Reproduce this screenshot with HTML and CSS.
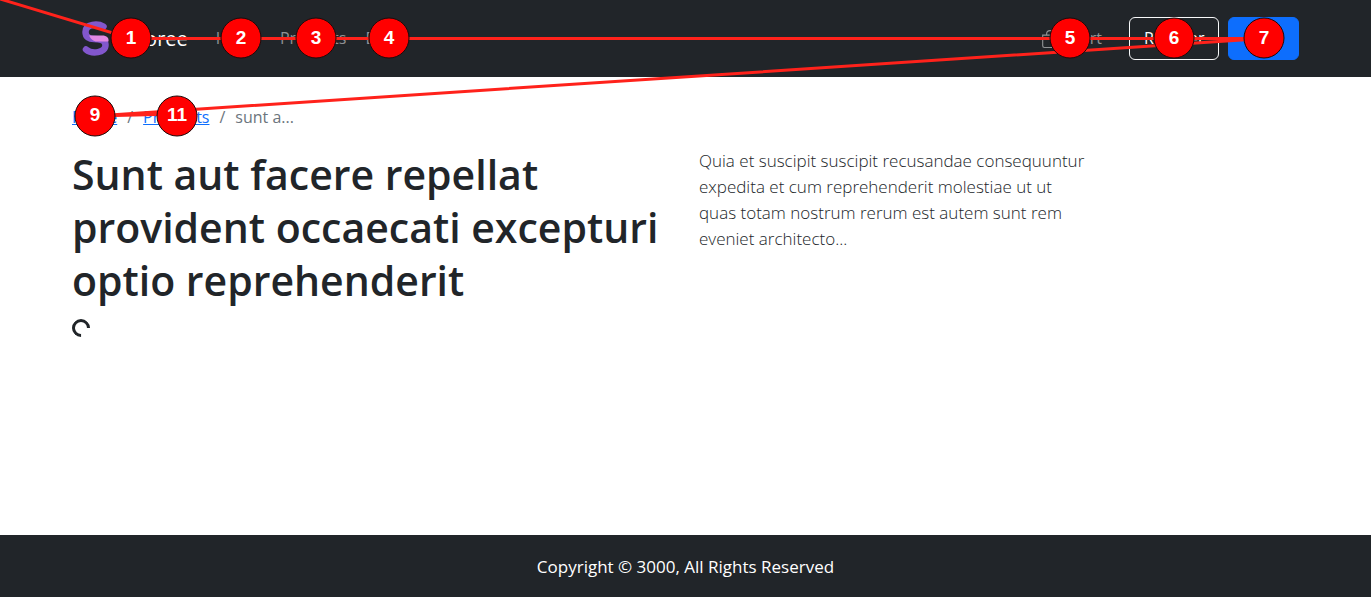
FILE: index.html
```html
<!DOCTYPE html>
<html lang="en">
<head>
<meta charset="utf-8">
<title>Storee</title>
<meta name="viewport" content="width=device-width, initial-scale=1">
<link rel="stylesheet" href="styles.css">
</head>
<body>
<header class="navbar">
  <a class="brand" href="#">
    <svg class="brand-logo" width="30" height="36" viewBox="0 0 30 36" fill="none" stroke-linecap="round" aria-hidden="true">
      <path d="M22.500 5.500C17 2.500 4.500 2.500 4.500 11C4.500 16 8 18 13 18C20 18 24.500 19 24.500 24C24.500 32 11 33.500 5 28.500" stroke="#8257cd" stroke-width="6.500"/>
      <path d="M8 14.500H21C26 14.500 28 17 27.500 20.500H16C12 20.500 10 18 8 14.500Z" fill="#e388e2"/>
    </svg>
    <span>Storee</span>
  </a>
  <nav class="menu" aria-label="Main">
    <a href="#">Home</a>
    <a href="#">Products</a>
    <a href="#">Blogs</a>
  </nav>
  <div class="actions">
    <a class="cart" href="#">
      <svg width="18" height="18" viewBox="0 0 16 16" fill="currentColor" aria-hidden="true"><path d="M8 1a2.500 2.500 0 0 1 2.500 2.500V4h-5v-.5A2.500 2.500 0 0 1 8 1zm3.500 3v-.5a3.500 3.500 0 1 0-7 0V4H1v10a2 2 0 0 0 2 2h10a2 2 0 0 0 2-2V4h-3.500zM2 5h12v9a1 1 0 0 1-1 1H3a1 1 0 0 1-1-1V5z"/></svg>
      Cart
    </a>
    <button class="btn btn-outline" type="button">Register</button>
    <button class="btn btn-primary" type="button">Login</button>
  </div>
</header>

<main class="content">
  <nav aria-label="Breadcrumb">
    <ol class="breadcrumb">
      <li><a href="#">Home</a></li>
      <li><a href="#">Products</a></li>
      <li aria-current="page">sunt a...</li>
    </ol>
  </nav>
  <div class="columns">
    <section>
      <h1 class="title">Sunt aut facere repellat provident occaecati excepturi optio reprehenderit</h1>
      <div class="spinner" role="status" aria-label="Loading"></div>
    </section>
    <p class="lead">Quia et suscipit suscipit recusandae consequuntur expedita et cum reprehenderit molestiae ut ut quas totam nostrum rerum est autem sunt rem eveniet architecto...</p>
  </div>
</main>

<footer class="footer">Copyright © 3000, All Rights Reserved</footer>

<svg class="tab-path" width="1371" height="150" viewBox="0 0 1371 150" aria-hidden="true">
  <path class="tab-line" d="M0 -1L131 38.500H1264L95 116L177 114"/>
  <g class="tab-stop">
    <circle cx="131" cy="38" r="20"/><text x="131" y="44">1</text>
    <circle cx="241" cy="38" r="20"/><text x="241" y="44">2</text>
    <circle cx="316" cy="38" r="20"/><text x="316" y="44">3</text>
    <circle cx="389" cy="38" r="20"/><text x="389" y="44">4</text>
    <circle cx="1070" cy="38" r="20"/><text x="1070" y="44">5</text>
    <circle cx="1174" cy="38" r="20"/><text x="1174" y="44">6</text>
    <circle cx="1264" cy="38" r="20"/><text x="1264" y="44">7</text>
    <circle cx="95" cy="116" r="20"/><text x="95" y="121">9</text>
    <circle cx="177" cy="116" r="20"/><text x="177" y="121">11</text>
  </g>
</svg>
</body>
</html>
```
FILE: styles.css
```css
* {
  box-sizing: border-box;
}

body {
  margin: 0;
  min-height: 100vh;
  display: flex;
  flex-direction: column;
  background: #fff;
  color: #212529;
  font-family: "Open Sans", "Noto Sans", sans-serif;
  font-size: 17px;
  line-height: 27px;
}

.navbar {
  display: flex;
  align-items: center;
  padding: 17px 72px;
  background: #212529;
}

.brand {
  display: flex;
  align-items: center;
  gap: 16px;
  padding-left: 9px;
  margin-right: 27px;
  color: #fff;
  font-size: 20px;
  text-decoration: none;
}

.menu {
  display: flex;
  gap: 17px;
}

.menu a,
.cart {
  color: #909294;
  font-size: 16px;
  text-decoration: none;
}

.menu a {
  padding: 0 1px;
}

.actions {
  display: flex;
  align-items: center;
  gap: 9px;
  margin-left: auto;
}

.cart {
  display: flex;
  align-items: center;
  gap: 12px;
  margin-right: 18px;
}

.btn {
  padding: 7px 14px;
  border: 1px solid transparent;
  border-radius: 6px;
  color: #fff;
  font-family: inherit;
  font-size: 16px;
  line-height: 27px;
}

.btn-outline {
  background: transparent;
  border-color: #f8f9fa;
}

.btn-primary {
  background: #0d6efd;
  border-color: #0d6efd;
}

.content {
  flex: 1;
  padding: 27px 72px;
}

.breadcrumb {
  display: flex;
  margin: 0 0 17px;
  padding: 0;
  list-style: none;
  color: #6c757d;
  font-size: 16px;
}

.breadcrumb li + li::before {
  content: "/";
  padding: 0 10px;
}

.breadcrumb a {
  color: #0d6efd;
}

.columns {
  display: grid;
  grid-template-columns: 1fr 1fr;
  gap: 27px;
}

.title {
  margin: 0 0 12px;
  font-size: 41px;
  font-weight: 600;
  line-height: 53px;
}

.spinner {
  width: 18px;
  height: 18px;
  border: 3px solid #212529;
  border-right-color: transparent;
  border-radius: 50%;
  transform: rotate(45deg);
}

.lead {
  max-width: 392px;
  margin: 0;
  font-weight: 300;
  line-height: 26px;
}

.footer {
  padding: 18px 72px 17px;
  background: #212529;
  color: #fff;
  text-align: center;
}

.tab-path {
  position: absolute;
  top: 0;
  left: 0;
  pointer-events: none;
}

.tab-line {
  fill: none;
  stroke: #ff221b;
  stroke-width: 3;
}

.tab-stop circle {
  fill: #f00;
  stroke: #1c0a0a;
  stroke-width: 1;
}

.tab-stop text {
  fill: #fff;
  font-family: "Liberation Sans", sans-serif;
  font-size: 19px;
  font-weight: 700;
  text-anchor: middle;
}
```
